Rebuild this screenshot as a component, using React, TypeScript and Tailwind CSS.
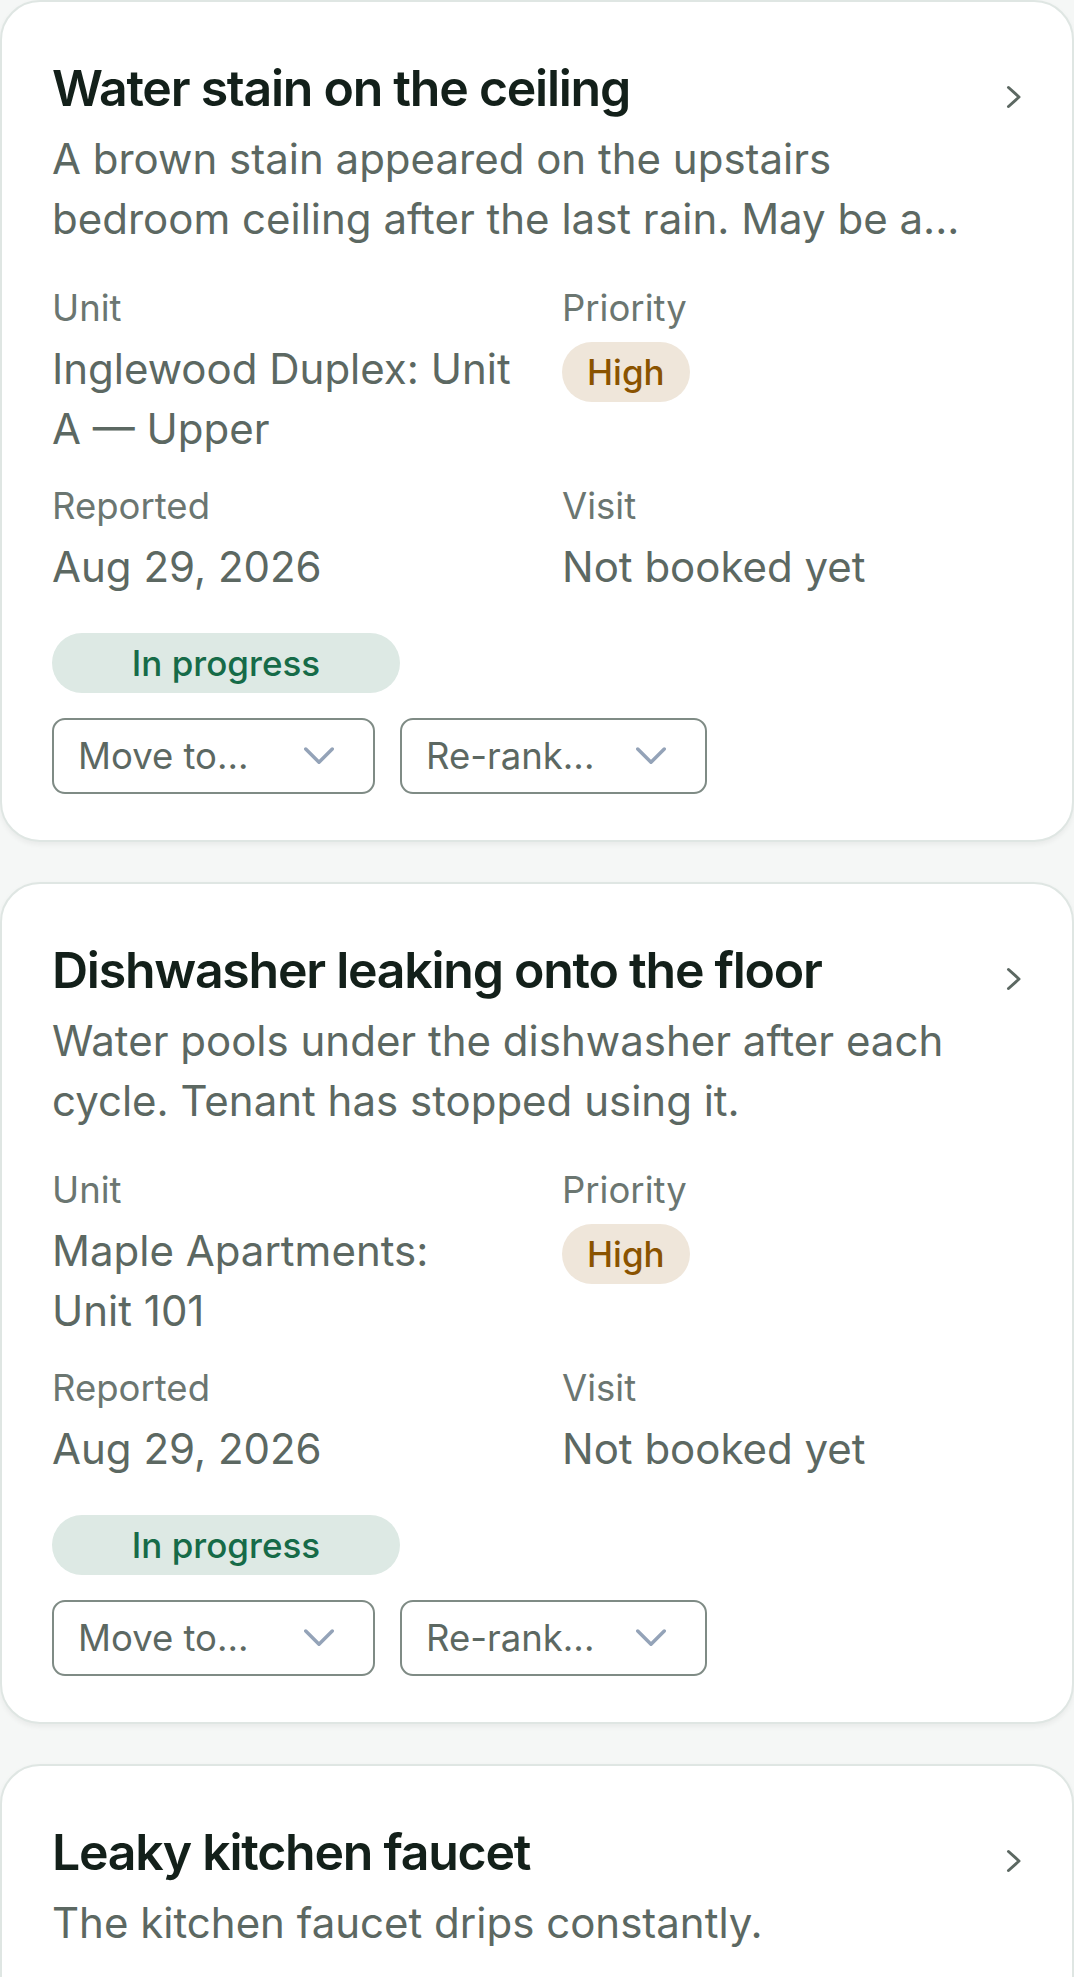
import React from "react";

type Ticket = {
  title: string;
  desc: string;
  unit: string;
  priority: string;
  reported: string;
  visit: string;
  status: string;
};

const tickets: Ticket[] = [
  {
    title: "Water stain on the ceiling",
    desc: "A brown stain appeared on the upstairs bedroom ceiling after the last rain. May be a...",
    unit: "Inglewood Duplex: Unit A — Upper",
    priority: "High",
    reported: "Aug 29, 2026",
    visit: "Not booked yet",
    status: "In progress",
  },
  {
    title: "Dishwasher leaking onto the floor",
    desc: "Water pools under the dishwasher after each cycle. Tenant has stopped using it.",
    unit: "Maple Apartments: Unit 101",
    priority: "High",
    reported: "Aug 29, 2026",
    visit: "Not booked yet",
    status: "In progress",
  },
  {
    title: "Leaky kitchen faucet",
    desc: "The kitchen faucet drips constantly.",
    unit: "Maple Apartments: Unit 102",
    priority: "Medium",
    reported: "Aug 28, 2026",
    visit: "Not booked yet",
    status: "In progress",
  },
];

function ChevronRight() {
  return (
    <svg width="16" height="24" viewBox="0 0 16 24" fill="none" className="mt-[32px] shrink-0">
      <path d="M2.5 2.5 L13 12 L2.5 21.5" stroke="#5c6862" strokeWidth="3" strokeLinecap="round" strokeLinejoin="round" />
    </svg>
  );
}

function ChevronDown() {
  return (
    <svg width="30" height="18" viewBox="0 0 30 18" fill="none" className="shrink-0">
      <path d="M1.75 2 L15 15.25 L28.25 2" stroke="#94a3b8" strokeWidth="3.5" strokeLinecap="round" strokeLinejoin="round" />
    </svg>
  );
}

function Field({ label, children }: { label: string; children: React.ReactNode }) {
  return (
    <div className="min-w-0">
      <div className="text-[36.5px] leading-[50px] text-[#6b7671]">{label}</div>
      {children}
    </div>
  );
}

function Card({ t }: { t: Ticket }) {
  return (
    <div className="rounded-[40px] border-2 border-[#dfe6e3] bg-white shadow-[0_2.5px_5px_rgba(0,0,0,0.05)] pl-[50px] pr-[50px] pt-[51px] pb-[46px]">
      <div className="flex items-start gap-[28px]">
        <div className="min-w-0 flex-1">
          <h3 className="text-[50px] leading-[70px] font-semibold text-[#13201a] tracking-[-1.25px]">{t.title}</h3>
          <p className="mt-[6px] text-[42px] leading-[60px] text-[#5c6862]">{t.desc}</p>
        </div>
        <ChevronRight />
      </div>

      <div className="mt-[34px] grid grid-cols-[463px_1fr] gap-x-[47px] gap-y-[22px]">
        <Field label="Unit">
          <div className="mt-[6px] text-[42px] leading-[60px] text-[#5c6862]">{t.unit}</div>
        </Field>
        <Field label="Priority">
          <div className="mt-[9px] inline-flex h-[60px] items-center rounded-full bg-[#efe6da] px-[25px] text-[35px] font-medium text-[#8a5300]">
            {t.priority}
          </div>
        </Field>
        <Field label="Reported">
          <div className="mt-[6px] text-[42px] leading-[60px] text-[#5c6862]">{t.reported}</div>
        </Field>
        <Field label="Visit">
          <div className="mt-[6px] text-[42px] leading-[60px] text-[#5c6862]">{t.visit}</div>
        </Field>
      </div>

      <div className="mt-[36px] flex h-[60px] w-[348px] items-center justify-center rounded-full bg-[#dde9e4] text-[35px] font-medium text-[#166b48]">
        {t.status}
      </div>

      <div className="mt-[25px] flex gap-[25px]">
        <div className="flex h-[76px] w-[323px] items-center justify-between rounded-[13px] border-[2.5px] border-[#7f8b85] pl-[24px] pr-[39px] text-[36.5px] text-[#5c6862]">
          <span>Move to...</span>
          <ChevronDown />
        </div>
        <div className="flex h-[76px] w-[307px] items-center justify-between rounded-[13px] border-[2.5px] border-[#7f8b85] pl-[24px] pr-[39px] text-[36.5px] text-[#5c6862]">
          <span>Re-rank...</span>
          <ChevronDown />
        </div>
      </div>
    </div>
  );
}

export default function App() {
  return (
    <div className="min-h-screen bg-[#f5f7f6] font-['Inter','Noto_Sans',sans-serif]">
      <div className="flex flex-col gap-[40px]">
        {tickets.map((t) => (
          <Card key={t.title} t={t} />
        ))}
      </div>
    </div>
  );
}
